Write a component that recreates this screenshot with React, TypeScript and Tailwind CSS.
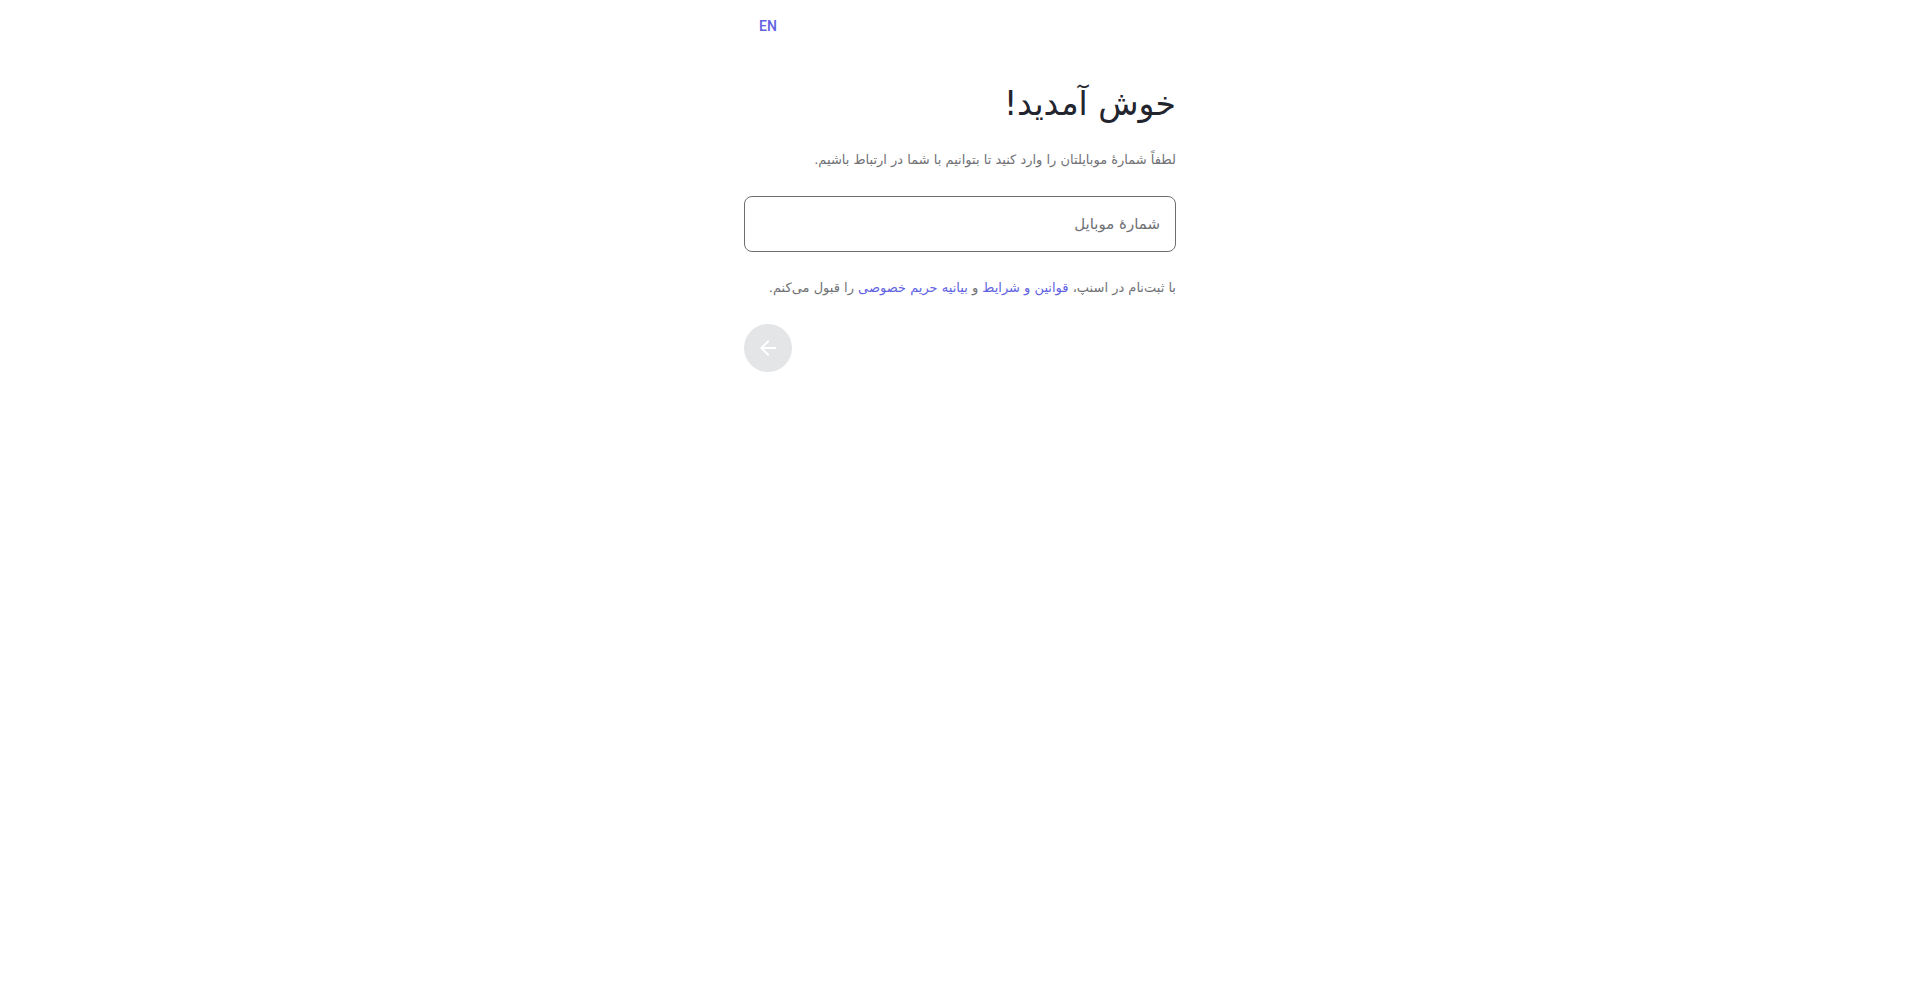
import { useState } from "react";

export default function App() {
  const [phone, setPhone] = useState("");
  return (
    <main
      dir="rtl"
      lang="fa"
      className="mx-auto min-h-screen w-full max-w-[432px] bg-white font-['DejaVu_Sans',sans-serif] text-[#707175]"
    >
      <header className="flex justify-end py-2">
        <button
          type="button"
          lang="en"
          className="h-9 rounded-lg px-[15px] font-[Roboto,sans-serif] text-sm font-medium text-[#6062e2]"
        >
          EN
        </button>
      </header>
      <h1 className="mt-7 text-[33px] leading-[48px] text-[#22242e]">خوش آمدید!</h1>
      <p className="mt-5 text-[13px] leading-6">
        لطفاً شمارهٔ موبایلتان را وارد کنید تا بتوانیم با شما در ارتباط باشیم.
      </p>
      <form onSubmit={(e) => e.preventDefault()}>
        <input
          type="tel"
          dir="rtl"
          aria-label="شمارهٔ موبایل"
          placeholder="شمارهٔ موبایل"
          value={phone}
          onChange={(e) => setPhone(e.target.value)}
          className="mt-6 block h-14 w-full rounded-lg border border-[#6d6e70] px-[15px] text-[15px] placeholder:text-[#707175]"
        />
        <p className="mt-6 text-[13px] leading-6">
          با ثبت‌نام در اسنپ،{" "}
          <a href="#terms" className="text-[#6062e2]">قوانین و شرایط</a> و{" "}
          <a href="#privacy" className="text-[#6062e2]">بیانیه حریم خصوصی</a> را قبول می‌کنم.
        </p>
        <div className="mt-6 flex justify-end">
          <button
            type="submit"
            disabled={!phone}
            aria-label="ادامه"
            className="flex size-12 items-center justify-center rounded-full bg-[#e3e5e7] text-white"
          >
            <svg viewBox="0 0 24 24" className="size-6" fill="currentColor">
              <path d="M20 11H7.83l5.59-5.59L12 4l-8 8 8 8 1.41-1.41L7.83 13H20v-2z" />
            </svg>
          </button>
        </div>
      </form>
    </main>
  );
}
